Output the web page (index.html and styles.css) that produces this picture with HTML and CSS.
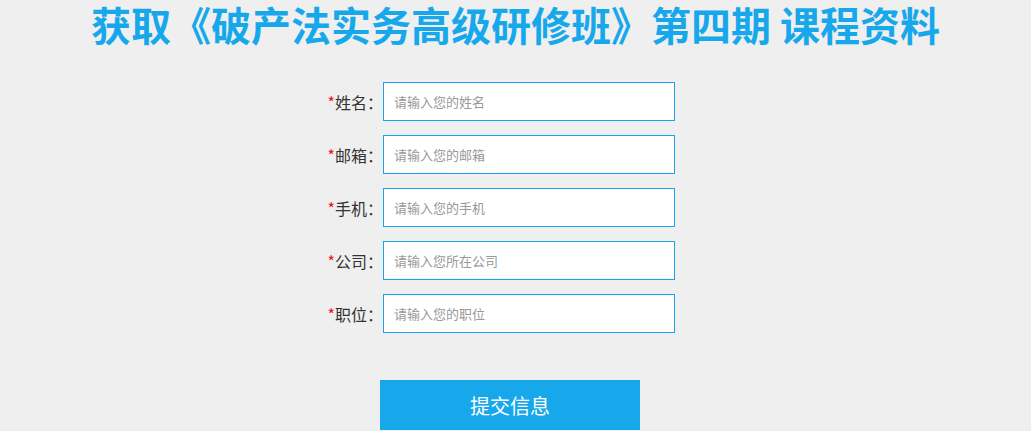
FILE: index.html
```html
<!DOCTYPE html>
<html lang="zh">
<head>
<meta charset="utf-8">
<link rel="stylesheet" href="styles.css">
</head>
<body>
<h1 class="title">获取《破产法实务高级研修班》第四期 课程资料</h1>
<form class="form">
  <div class="row"><label class="label"><span class="req">*</span>姓名：</label><input class="field" placeholder="请输入您的姓名"></div>
  <div class="row"><label class="label"><span class="req">*</span>邮箱：</label><input class="field" placeholder="请输入您的邮箱"></div>
  <div class="row"><label class="label"><span class="req">*</span>手机：</label><input class="field" placeholder="请输入您的手机"></div>
  <div class="row"><label class="label"><span class="req">*</span>公司：</label><input class="field" placeholder="请输入您所在公司"></div>
  <div class="row"><label class="label"><span class="req">*</span>职位：</label><input class="field" placeholder="请输入您的职位"></div>
  <div class="actions"><button type="button" class="submit">提交信息</button></div>
</form>
</body>
</html>
```
FILE: styles.css
```css
html, body {
  margin: 0;
  padding: 0;
  background: #efefef;
  font-family: "Noto Sans CJK SC", "Noto Sans", sans-serif;
}
.title {
  margin: 0;
  height: 50px;
  line-height: 48px;
  text-align: center;
  font-size: 40px;
  font-weight: 700;
  color: #17a8ec;
  white-space: nowrap;
}
.form {
  margin: 32px 0 0 0;
  padding-left: 283px;
}
.row {
  display: flex;
  align-items: center;
  height: 39px;
  margin-bottom: 14px;
}
.label {
  width: 100px;
  text-align: right;
  font-size: 16px;
  color: #333;
}
.req {
  color: #ee1111;
}
.field {
  box-sizing: border-box;
  width: 292px;
  height: 39px;
  border: 1px solid #1aa3e8;
  background: #fff;
  padding: 0 10px;
  font-family: inherit;
  font-size: 13px;
  color: #333;
  outline: none;
}
.field::placeholder {
  color: #999;
}
.actions {
  padding-left: 97px;
  margin-top: 47px;
}
.submit {
  display: block;
  width: 260px;
  height: 50px;
  border: none;
  background: #17a8ec;
  color: #fff;
  font-family: inherit;
  font-size: 20px;
  cursor: pointer;
}
```
